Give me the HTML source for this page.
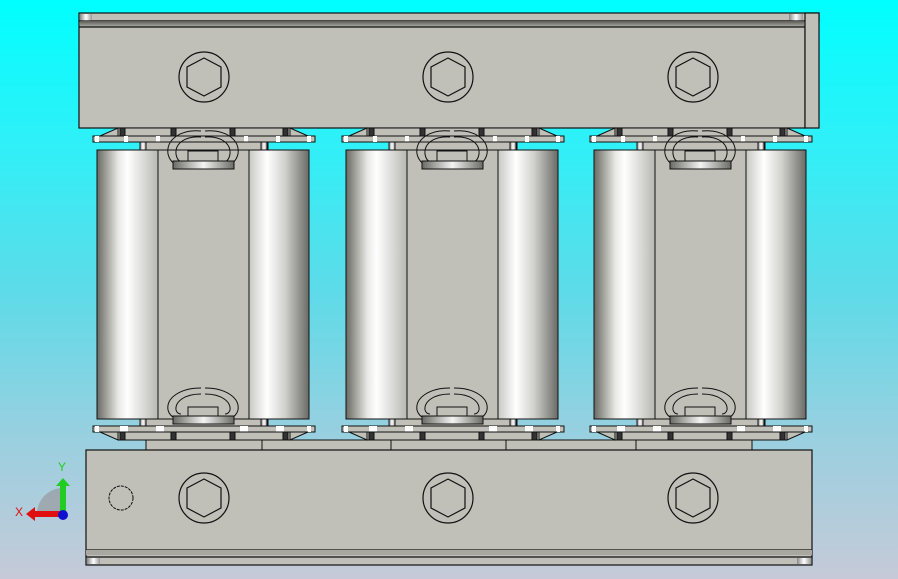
<!DOCTYPE html>
<html><head><style>
html,body{margin:0;padding:0}
body{width:898px;height:579px;overflow:hidden;background:linear-gradient(#00ffff 0%,#30f0f8 25%,#5ddbe8 50%,#98d0e0 75%,#c6cad8 100%);font-family:"Liberation Sans",sans-serif}
svg{position:absolute;left:0;top:0}
</style></head><body>
<svg width="898" height="579" viewBox="0 0 898 579">
<defs>
<linearGradient id="cl" x1="0" x2="1"><stop offset="0" stop-color="#6a6a64"/><stop offset="0.35" stop-color="#e8e8e4"/><stop offset="0.5" stop-color="#ffffff"/><stop offset="1" stop-color="#b8b8b2"/></linearGradient>
<linearGradient id="cr" x1="0" x2="1"><stop offset="0" stop-color="#c8c8c2"/><stop offset="0.3" stop-color="#ffffff"/><stop offset="0.6" stop-color="#d0d0cc"/><stop offset="1" stop-color="#6a6a66"/></linearGradient>
<linearGradient id="cp" x1="0" x2="1"><stop offset="0" stop-color="#6a6a66"/><stop offset="0.5" stop-color="#f4f4f2"/><stop offset="1" stop-color="#6a6a66"/></linearGradient>
<linearGradient id="st" x1="0" x2="1"><stop offset="0" stop-color="#888"/><stop offset="0.5" stop-color="#fff"/><stop offset="1" stop-color="#999"/></linearGradient>
<linearGradient id="tb" x1="0" y1="0" x2="0" y2="1"><stop offset="0" stop-color="#5a5a56"/><stop offset="1" stop-color="#b0afa8"/></linearGradient>
<g id="hx"><circle r="25" fill="none" stroke="#111" stroke-width="1.2"/><polygon points="0,-19 17,-10 17,10 0,19 -17,10 -17,-10" fill="none" stroke="#111" stroke-width="1.2"/></g>
<g id="unit" stroke="#111" stroke-width="1">
<polygon points="118,128 290,128 290,136 118,136" fill="#c0bfb8"/>
<polygon points="100,136 118,128 118,136" fill="#c0bfb8"/>
<polygon points="290,128 308,136 290,136" fill="#c0bfb8"/>
<rect x="120" y="128" width="5" height="8" fill="#333"/><rect x="171" y="128" width="5" height="8" fill="#333"/><rect x="230" y="128" width="5" height="8" fill="#333"/><rect x="283" y="128" width="5" height="8" fill="#333"/>
<rect x="93" y="136" width="222" height="6" fill="#c0bfb8"/>
<rect x="95" y="136" width="4" height="6" fill="#fff" stroke="none"/><rect x="124" y="136" width="4" height="6" fill="#fff" stroke="none"/><rect x="156" y="136" width="4" height="6" fill="#fff" stroke="none"/><rect x="244" y="136" width="4" height="6" fill="#fff" stroke="none"/><rect x="276" y="136" width="4" height="6" fill="#fff" stroke="none"/><rect x="307" y="136" width="4" height="6" fill="#fff" stroke="none"/>
<rect x="140" y="142" width="128" height="8" fill="#c0bfb8"/>
<rect x="140" y="142" width="6" height="8" fill="url(#st)"/><rect x="261" y="142" width="6" height="8" fill="url(#st)"/>
<rect x="140" y="419" width="128" height="7" fill="#c0bfb8"/>
<rect x="140" y="419" width="6" height="7" fill="url(#st)"/><rect x="261" y="419" width="6" height="7" fill="url(#st)"/>
<rect x="93" y="426" width="222" height="6" fill="#c0bfb8"/>
<rect x="95" y="426" width="4" height="6" fill="#fff" stroke="none"/><rect x="120" y="426" width="8" height="6" fill="#fff" stroke="none"/><rect x="156" y="426" width="8" height="6" fill="#fff" stroke="none"/><rect x="240" y="426" width="8" height="6" fill="#fff" stroke="none"/><rect x="276" y="426" width="8" height="6" fill="#fff" stroke="none"/><rect x="307" y="426" width="4" height="6" fill="#fff" stroke="none"/>
<polygon points="118,432 290,432 290,440 118,440" fill="#c0bfb8"/>
<polygon points="100,432 118,432 118,440" fill="#c0bfb8"/>
<polygon points="290,432 308,432 290,440" fill="#c0bfb8"/>
<rect x="120" y="432" width="5" height="8" fill="#333"/><rect x="171" y="432" width="5" height="8" fill="#333"/><rect x="230" y="432" width="5" height="8" fill="#333"/><rect x="283" y="432" width="5" height="8" fill="#333"/>
<rect x="158" y="150" width="91" height="269" fill="#c0bfb8"/>
<rect x="97" y="150" width="61" height="269" fill="url(#cl)"/>
<rect x="249" y="150" width="60" height="269" fill="url(#cr)"/>
<path d="M201,131 C180,129 166,140 168,154 C170,162 176,166 180,166 M205,131 C226,129 240,140 238,154 C236,162 230,166 226,166" fill="none"/>
<path d="M201,137 C184,136 175,144 176,154 C177,160 180,162 182,162 M205,137 C222,136 231,144 230,154 C229,160 226,162 224,162" fill="none"/>
<rect x="188" y="151" width="30" height="10" fill="#c0bfb8"/>
<rect x="173" y="161" width="61" height="8" fill="url(#cp)"/>
<path d="M201,388 C180,388 166,398 168,410 C169,414 172,417 174,417 M205,388 C226,388 240,398 238,410 C237,414 234,417 232,417" fill="none"/>
<path d="M201,394 C184,394 175,402 176,410 C177,413 179,414 181,414 M205,394 C222,394 231,402 230,410 C229,413 227,414 225,414" fill="none"/>
<rect x="188" y="407" width="30" height="9" fill="#c0bfb8"/>
<rect x="173" y="416" width="61" height="8" fill="url(#cp)"/>
</g>
</defs>
<g stroke="#111" stroke-width="1.2">
<rect x="79" y="13" width="740" height="8" fill="#c0bfb8"/>
<rect x="80" y="14" width="12" height="7" fill="url(#st)" stroke="none"/>
<rect x="789" y="14" width="14" height="7" fill="url(#st)" stroke="none"/>
<rect x="79" y="21" width="726" height="107" fill="#c0bfb8"/>
<rect x="80" y="21" width="724" height="6" fill="url(#tb)" stroke="none"/>
<line x1="79" y1="27" x2="805" y2="27"/>
<rect x="805" y="13" width="14" height="115" fill="#c0bfb8"/>
</g>
<use href="#hx" x="204" y="77"/><use href="#hx" x="448" y="77"/><use href="#hx" x="693" y="77"/>
<g stroke="#111" stroke-width="1">
<rect x="146" y="440" width="606" height="10" fill="#c0bfb8"/>
<line x1="262" y1="440" x2="262" y2="450"/><line x1="391" y1="440" x2="391" y2="450"/><line x1="506" y1="440" x2="506" y2="450"/><line x1="636" y1="440" x2="636" y2="450"/>
</g>
<use href="#unit"/>
<use href="#unit" x="249"/>
<use href="#unit" x="497"/>
<g stroke="#111" stroke-width="1.2">
<rect x="86" y="450" width="726" height="115" fill="#c0bfb8"/>
<line x1="86" y1="550" x2="812" y2="550"/>
<rect x="86" y="550" width="726" height="5" fill="#a8a7a0" stroke="none"/>
<line x1="86" y1="557" x2="812" y2="557"/>
<rect x="87" y="558" width="13" height="6" fill="url(#st)" stroke="none"/>
<rect x="797" y="558" width="14" height="6" fill="url(#st)" stroke="none"/>
</g>
<use href="#hx" x="204" y="498"/><use href="#hx" x="448" y="498"/><use href="#hx" x="693" y="498"/>
<circle cx="121" cy="498" r="12" fill="none" stroke="#111" stroke-width="1" stroke-dasharray="3,1"/>
<path d="M63,500 L63,488 A26,26 0 0 0 37,514 L63,514 Z" fill="#9aa0a8" opacity="0.8"/>
<rect x="60" y="484" width="6" height="28" fill="#22cc22"/>
<polygon points="56,486 63,478 70,486" fill="#22cc22"/>
<rect x="34" y="511" width="28" height="6" fill="#e01010"/>
<polygon points="35,507 26,514 35,521" fill="#e01010"/>
<circle cx="63" cy="515" r="5" fill="#1010d0"/>
<text x="58" y="471" font-size="12" fill="#22cc22">Y</text>
<text x="15" y="516" font-size="12" fill="#e01010">X</text>
</svg>
</body></html>
